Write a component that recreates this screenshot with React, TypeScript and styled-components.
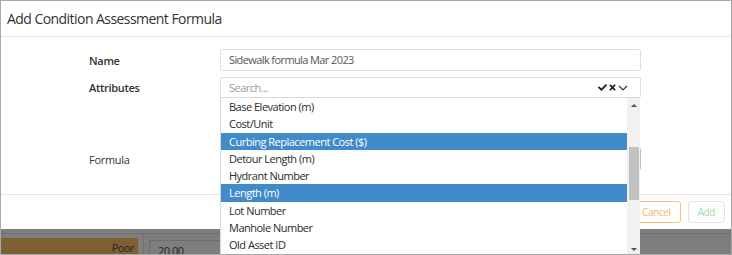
import React from 'react';
import styled, { createGlobalStyle } from 'styled-components';
import { FaCheck, FaTimes } from 'react-icons/fa';

const GlobalStyle = createGlobalStyle`
  html, body {
    margin: 0;
    padding: 0;
    background: #fff;
  }
  body {
    font-family: "Open Sans", "Noto Sans", sans-serif;
    color: #333;
    letter-spacing: -0.5px;
  }
  * {
    box-sizing: border-box;
  }
`;

const ATTRIBUTES = [
  'Base Elevation (m)',
  'Cost/Unit',
  'Curbing Replacement Cost ($)',
  'Detour Length (m)',
  'Hydrant Number',
  'Length (m)',
  'Lot Number',
  'Manhole Number',
  'Old Asset ID',
  'Owner',
];

const SELECTED = ['Curbing Replacement Cost ($)', 'Length (m)'];

const App = () => {
  return (
    <>
      <GlobalStyle />
      <Frame>
        <Modal>
          <Header>
            <Title>Add Condition Assessment Formula</Title>
          </Header>
          <Body>
            <Label bold>Name</Label>
            <TextInput>Sidewalk formula Mar 2023</TextInput>

            <Label bold>Attributes</Label>
            <AttrField>
              <Placeholder>Search...</Placeholder>
              <Actions>
                <FaCheck size={9} />
                <FaTimes size={9} />
                <svg width="10" height="6" viewBox="0 0 10 6">
                  <path d="M1 1 L5 5 L9 1" fill="none" stroke="#333" strokeWidth="1.2" />
                </svg>
              </Actions>
              <Dropdown>
                <List>
                  {ATTRIBUTES.map((name) => (
                    <Item key={name} active={SELECTED.includes(name)}>
                      {name}
                    </Item>
                  ))}
                </List>
                <Scrollbar>
                  <Arrow>
                    <ArrowUp />
                  </Arrow>
                  <Thumb />
                  <Arrow bottom>
                    <ArrowDown />
                  </Arrow>
                </Scrollbar>
              </Dropdown>
            </AttrField>

            <Label formula>Formula</Label>
            <FormulaBox />
          </Body>
          <Footer>
            <Button kind="warning">Cancel</Button>
            <Button kind="success">Add</Button>
          </Footer>
        </Modal>
        <Backdrop>
          <BackdropRow>
            <RatingCell>Poor</RatingCell>
            <ValueCell>
              <ValueInput>20.00</ValueInput>
            </ValueCell>
          </BackdropRow>
        </Backdrop>
      </Frame>
    </>
  );
};

const Frame = styled.div`
  width: 732px;
  height: 255px;
  border: 1px solid #a9a9a9;
  background: #7e7e7e;
  overflow: hidden;
  display: flex;
  flex-direction: column;
`;

const Modal = styled.div`
  height: 228px;
  flex-shrink: 0;
  background: #fff;
  display: flex;
  flex-direction: column;
`;

const Header = styled.div`
  height: 36px;
  border-bottom: 1px solid #e7e7e7;
  display: flex;
  align-items: center;
  padding: 0 6px;
`;

const Title = styled.div`
  font-size: 14px;
  letter-spacing: -0.55px;
  color: #333;
`;

const Body = styled.div`
  flex: 1;
  padding: 12px 0 0 88px;
  display: grid;
  grid-template-columns: 131px 421px;
  grid-auto-rows: min-content;
  row-gap: 6px;
  align-items: center;
`;

const Label = styled.div<{ bold?: boolean; formula?: boolean }>`
  font-size: 11px;
  font-weight: ${(p) => (p.bold ? 600 : 400)};
  letter-spacing: -0.3px;
  color: #333;
  margin-top: ${(p) => (p.formula ? '43px' : '0')};
`;

const TextInput = styled.div`
  height: 22px;
  border: 1px solid #dcdfe4;
  border-radius: 2px;
  padding-left: 8px;
  font-size: 11px;
  letter-spacing: -0.6px;
  line-height: 20px;
  color: #555;
`;

const AttrField = styled.div`
  position: relative;
  height: 21px;
  border: 1px solid #dcdfe4;
  border-radius: 2px;
  padding: 0 12px 0 8px;
  display: flex;
  align-items: center;
  justify-content: space-between;
`;

const Placeholder = styled.span`
  font-size: 11px;
  color: #999;
`;

const Actions = styled.div`
  display: flex;
  align-items: center;
  gap: 1px;
  color: #1e1e1e;
`;

const Dropdown = styled.div`
  position: absolute;
  z-index: 2;
  top: 100%;
  left: -1px;
  right: 0;
  height: 160px;
  background: #fff;
  border: 1px solid #d5d8dd;
  border-right: none;
  display: flex;
`;

const List = styled.div`
  flex: 1;
  overflow: hidden;
`;

const Item = styled.div<{ active?: boolean }>`
  height: 17.3px;
  padding-left: 8px;
  font-size: 11px;
  line-height: 17px;
  white-space: nowrap;
  color: ${(p) => (p.active ? '#fff' : '#2b2b2b')};
  background: ${(p) => (p.active ? '#428bca' : 'transparent')};
`;

const Scrollbar = styled.div`
  width: 13px;
  background: #f1f1f1;
  display: flex;
  flex-direction: column;
`;

const Arrow = styled.div<{ bottom?: boolean }>`
  height: 14px;
  display: flex;
  align-items: center;
  justify-content: center;
  margin-top: ${(p) => (p.bottom ? 'auto' : '0')};
`;

const ArrowUp = styled.div`
  width: 0;
  height: 0;
  border-left: 3px solid transparent;
  border-right: 3px solid transparent;
  border-bottom: 3px solid #505050;
`;

const ArrowDown = styled(ArrowUp)`
  border-bottom: none;
  border-top: 3px solid #505050;
`;

const Thumb = styled.div`
  margin: 35px 1px 0 2px;
  height: 53px;
  background: #c1c1c1;
`;

const FormulaBox = styled.div`
  height: 24px;
  border: 1px solid #bdbdbd;
  border-radius: 3px;
  margin-top: 43px;
`;

const Footer = styled.div`
  height: 35px;
  border-top: 1px solid #e7e7e7;
  padding: 0 6px;
  display: flex;
  align-items: center;
  justify-content: flex-end;
  gap: 7px;
`;

const Button = styled.div<{ kind: 'warning' | 'success' }>`
  height: 22px;
  padding: 0 9px;
  border-radius: 3px;
  font-size: 10px;
  letter-spacing: -0.4px;
  line-height: 20px;
  background: #fff;
  border: 1px solid ${(p) => (p.kind === 'warning' ? '#f6c27a' : '#e2e2e2')};
  color: ${(p) => (p.kind === 'warning' ? '#f4b566' : '#a3d9a9')};
`;

const Backdrop = styled.div`
  flex: 1;
  padding-top: 4px;
`;

const BackdropRow = styled.div`
  border-top: 1px solid #6f6f6f;
  padding-top: 4px;
  display: flex;
`;

const RatingCell = styled.div`
  width: 137px;
  height: 20px;
  background: #7f6033;
  font-size: 11px;
  line-height: 20px;
  text-align: right;
  padding-right: 4px;
  color: #262626;
`;

const ValueCell = styled.div`
  margin-left: 5px;
  margin-top: -4px;
  padding: 6px 0 0 5px;
  border-left: 1px solid #707070;
  width: 100px;
`;

const ValueInput = styled.div`
  height: 20px;
  border: 1px solid #6c6c6c;
  border-right: none;
  padding-left: 8px;
  font-size: 11px;
  line-height: 20px;
  color: #262626;
`;

export default App;
